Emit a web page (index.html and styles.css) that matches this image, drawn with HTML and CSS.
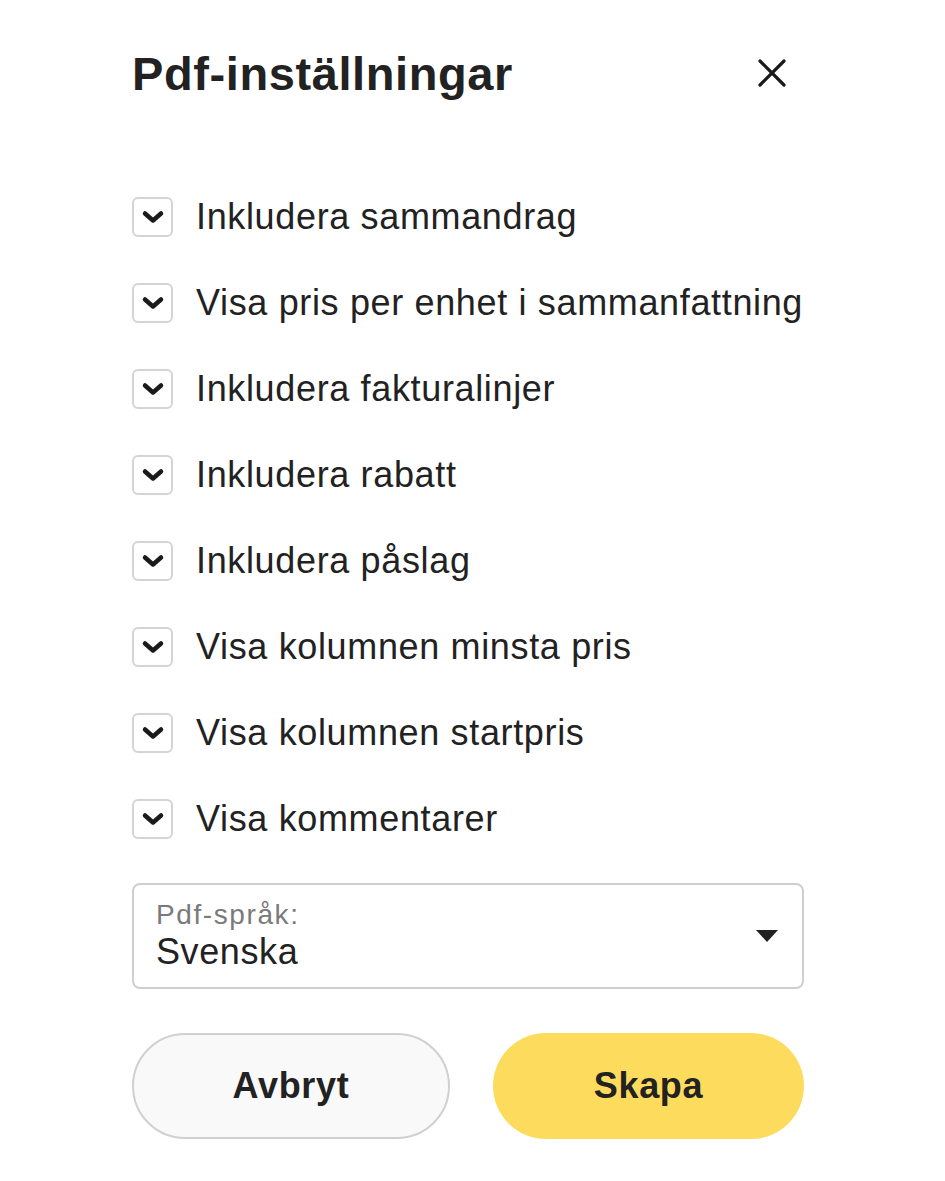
FILE: index.html
```html
<!DOCTYPE html>
<html lang="sv">
<head>
    <meta charset="UTF-8">
    <meta name="viewport" content="width=device-width, initial-scale=1.0">
    <title>Pdf-inställningar</title>
    <link rel="stylesheet" href="styles.css">
</head>
<body>
    <div class="dialog">
        <div class="dialog-header">
            <h2>Pdf-inställningar</h2>
            <button class="close-btn" aria-label="Stäng">
                <svg width="30" height="30" viewBox="0 0 30 30">
                    <path d="M3 3 L27 27 M27 3 L3 27" stroke="#1a1a1a" stroke-width="3.2" stroke-linecap="round"/>
                </svg>
            </button>
        </div>

        <div class="options">
            <label class="option"><span class="check"><svg width="24" height="14" viewBox="0 0 24 14"><path d="M4 3.5 L12 10.5 L20 3.5" fill="none" stroke="#1a1a1a" stroke-width="4.5" stroke-linecap="round" stroke-linejoin="round"/></svg></span>Inkludera sammandrag</label>
            <label class="option"><span class="check"><svg width="24" height="14" viewBox="0 0 24 14"><path d="M4 3.5 L12 10.5 L20 3.5" fill="none" stroke="#1a1a1a" stroke-width="4.5" stroke-linecap="round" stroke-linejoin="round"/></svg></span>Visa pris per enhet i sammanfattning</label>
            <label class="option"><span class="check"><svg width="24" height="14" viewBox="0 0 24 14"><path d="M4 3.5 L12 10.5 L20 3.5" fill="none" stroke="#1a1a1a" stroke-width="4.5" stroke-linecap="round" stroke-linejoin="round"/></svg></span>Inkludera fakturalinjer</label>
            <label class="option"><span class="check"><svg width="24" height="14" viewBox="0 0 24 14"><path d="M4 3.5 L12 10.5 L20 3.5" fill="none" stroke="#1a1a1a" stroke-width="4.5" stroke-linecap="round" stroke-linejoin="round"/></svg></span>Inkludera rabatt</label>
            <label class="option"><span class="check"><svg width="24" height="14" viewBox="0 0 24 14"><path d="M4 3.5 L12 10.5 L20 3.5" fill="none" stroke="#1a1a1a" stroke-width="4.5" stroke-linecap="round" stroke-linejoin="round"/></svg></span>Inkludera påslag</label>
            <label class="option"><span class="check"><svg width="24" height="14" viewBox="0 0 24 14"><path d="M4 3.5 L12 10.5 L20 3.5" fill="none" stroke="#1a1a1a" stroke-width="4.5" stroke-linecap="round" stroke-linejoin="round"/></svg></span>Visa kolumnen minsta pris</label>
            <label class="option"><span class="check"><svg width="24" height="14" viewBox="0 0 24 14"><path d="M4 3.5 L12 10.5 L20 3.5" fill="none" stroke="#1a1a1a" stroke-width="4.5" stroke-linecap="round" stroke-linejoin="round"/></svg></span>Visa kolumnen startpris</label>
            <label class="option"><span class="check"><svg width="24" height="14" viewBox="0 0 24 14"><path d="M4 3.5 L12 10.5 L20 3.5" fill="none" stroke="#1a1a1a" stroke-width="4.5" stroke-linecap="round" stroke-linejoin="round"/></svg></span>Visa kommentarer</label>
        </div>

        <div class="select-box">
            <div class="select-text">
                <span class="select-label">Pdf-språk:</span>
                <span class="select-value">Svenska</span>
            </div>
            <span class="caret"></span>
        </div>

        <div class="actions">
            <button class="btn btn-cancel">Avbryt</button>
            <button class="btn btn-create">Skapa</button>
        </div>
    </div>
</body>
</html>
```

FILE: styles.css
```css
body {
    margin: 0;
    background: #ffffff;
    font-family: "Liberation Sans", Arial, sans-serif;
    color: #222222;
}
.dialog {
    width: 672px;
    margin-left: 132px;
    padding-top: 42px;
}
.dialog-header {
    display: flex;
    justify-content: space-between;
    align-items: center;
    height: 62px;
}
.dialog-header h2 {
    margin: 0;
    font-size: 47px;
    letter-spacing: 0.6px;
    font-weight: bold;
    color: #222222;
}
.close-btn {
    background: none;
    border: none;
    padding: 0;
    margin-right: 17px;
    width: 30px;
    height: 30px;
    cursor: pointer;
}
.options {
    margin-top: 93px;
    display: flex;
    flex-direction: column;
    gap: 46px;
}
.option {
    display: flex;
    align-items: center;
    gap: 23px;
    height: 40px;
    font-size: 36px;
    letter-spacing: 0.65px;
    white-space: nowrap;
    color: #222222;
}
.check {
    flex: none;
    width: 37px;
    height: 36px;
    border: 2px solid #d4d4d4;
    border-radius: 6px;
    display: flex;
    align-items: center;
    justify-content: center;
}
.select-box {
    margin-top: 44px;
    height: 102px;
    border: 2px solid #cfcfcf;
    border-radius: 8px;
    display: flex;
    align-items: center;
    justify-content: space-between;
    padding: 0 22px;
}
.select-text {
    display: flex;
    flex-direction: column;
}
.select-label {
    font-size: 28px;
    letter-spacing: 1.6px;
    color: #7a7a7a;
    line-height: 32px;
}
.select-value {
    font-size: 36px;
    letter-spacing: 0.6px;
    line-height: 42px;
    color: #222222;
}
.caret {
    width: 0;
    height: 0;
    border-left: 11px solid transparent;
    border-right: 11px solid transparent;
    border-top: 12px solid #222222;
    margin-right: 2px;
}
.actions {
    margin-top: 44px;
    display: flex;
    gap: 43px;
}
.btn {
    height: 106px;
    border-radius: 53px;
    font-family: "Liberation Sans", Arial, sans-serif;
    font-size: 36px;
    letter-spacing: 0.7px;
    font-weight: bold;
    color: #222222;
    cursor: pointer;
}
.btn-cancel {
    width: 318px;
    background: #f9f9f9;
    border: 2px solid #d0d0d0;
}
.btn-create {
    flex: 1;
    background: #fddb5c;
    border: none;
}
```
